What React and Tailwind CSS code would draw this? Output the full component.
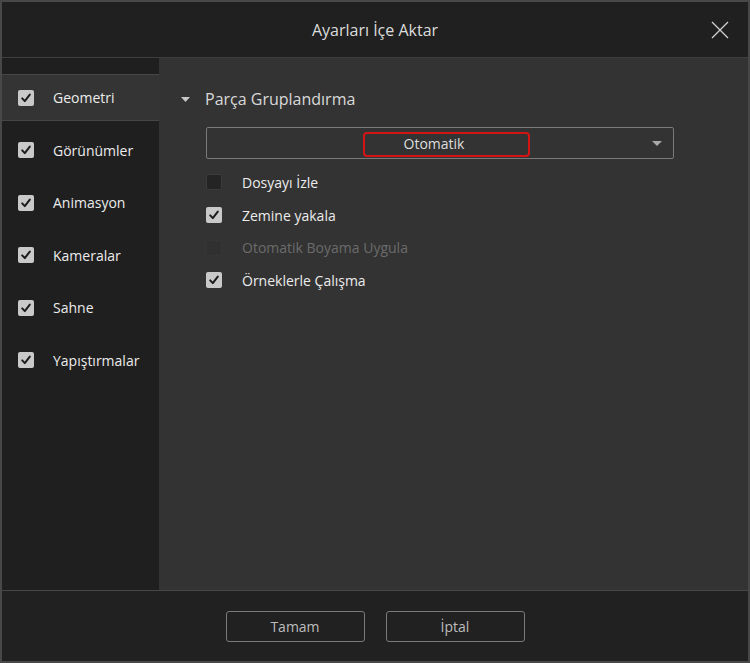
import React from 'react';

const sections = ['Geometri', 'Görünümler', 'Animasyon', 'Kameralar', 'Sahne', 'Yapıştırmalar'];

const options = [
  { label: 'Dosyayı İzle', state: 'off' },
  { label: 'Zemine yakala', state: 'on' },
  { label: 'Otomatik Boyama Uygula', state: 'disabled' },
  { label: 'Örneklerle Çalışma', state: 'on' },
];

const Check = ({ state = 'on' }) => {
  if (state === 'off') {
    return <span className="block w-4 h-4 rounded-[2px] bg-[#242424] border border-[#3c3c3c]" />;
  }
  if (state === 'disabled') {
    return <span className="block w-4 h-4 rounded-[2px] bg-[#303030] border border-[#353535]" />;
  }
  return (
    <span className="flex items-center justify-center w-4 h-4 rounded-[2px] bg-[#c9c9c9]">
      <svg width="12" height="12" viewBox="0 0 12 12" fill="none">
        <path d="M2.2 6.4 L4.8 9.1 L9.8 2.6" stroke="#1c1c1c" strokeWidth="2" strokeLinecap="round" strokeLinejoin="round" />
      </svg>
    </span>
  );
};

const App = () => {
  return (
    <div
      className="w-[750px] h-[663px] flex flex-col bg-[#202020] border-2 border-[#484848] text-[#e6e6e6] overflow-hidden"
      style={{ fontFamily: '"Open Sans", "Noto Sans", sans-serif' }}
    >
      {/* Title bar */}
      <header className="relative h-[56px] shrink-0 flex items-center justify-center bg-[#202020] border-b border-[#3e3e3e]">
        <h1 className="text-[16px] text-[#dcdcdc]">Ayarları İçe Aktar</h1>
        <button type="button" className="absolute right-[18px] top-[18px] w-[20px] h-[20px] flex items-center justify-center">
          <svg width="20" height="20" viewBox="0 0 20 20" fill="none">
            <path d="M2 2 L18 18 M18 2 L2 18" stroke="#cfcfcf" strokeWidth="1.3" />
          </svg>
        </button>
      </header>

      {/* Body */}
      <div className="flex h-[532px] shrink-0">
        {/* Sidebar */}
        <nav className="w-[157px] shrink-0 bg-[#1f1f1f] pt-[16px] flex flex-col gap-[5.5px]">
          {sections.map((s, i) => (
            <div
              key={s}
              className={
                i === 0
                  ? 'h-[47px] flex items-center pl-[16px] bg-[#343434] border-y border-[#464646]'
                  : 'h-[47px] flex items-center pl-[16px]'
              }
            >
              <Check />
              <span className="ml-[19px] text-[14px] text-[#ececec]">{s}</span>
            </div>
          ))}
        </nav>

        {/* Content */}
        <main className="flex-1 bg-[#333333] pl-[22px] pt-[29px]">
          <div className="flex items-center h-[24px]">
            <svg width="9" height="5" viewBox="0 0 9 5">
              <path d="M0 0 L9 0 L4.5 5 Z" fill="#c8c8c8" />
            </svg>
            <span className="ml-[15px] text-[16px] text-[#d9d9d9]">Parça Gruplandırma</span>
          </div>

          <div className="ml-[25px] mt-[16px] w-[468px]">
            <div className="relative h-[32px] flex items-center justify-center pr-[12px] border border-[#7a7a7a] rounded-[2px]">
              <span className="text-[14px] text-[#dedede]">Otomatik</span>
              <svg className="absolute right-[11px] top-[13px]" width="10" height="5" viewBox="0 0 10 5">
                <path d="M0 0 L10 0 L5 5 Z" fill="#a9a9a9" />
              </svg>
              <span className="absolute left-[156px] top-[4px] w-[167px] h-[25px] border-2 border-[#d21414] rounded-[4px]" />
            </div>

            <div className="mt-[7px] flex flex-col">
              {options.map((o) => (
                <div key={o.label} className="h-[32.7px] flex items-center">
                  <Check state={o.state} />
                  <span
                    className={
                      o.state === 'disabled'
                        ? 'ml-[20px] text-[14px] text-[#6b6b6b]'
                        : 'ml-[20px] text-[14px] text-[#ececec]'
                    }
                  >
                    {o.label}
                  </span>
                </div>
              ))}
            </div>
          </div>
        </main>
      </div>

      {/* Footer */}
      <footer className="h-[71px] shrink-0 flex items-start justify-center gap-[21px] pt-[20px] bg-[#212121] border-t border-[#474747]">
        <button type="button" className="w-[139px] h-[31px] rounded-[3px] border border-[#7a7a7a] text-[14px] text-[#bdbdbd]">
          Tamam
        </button>
        <button type="button" className="w-[139px] h-[31px] rounded-[3px] border border-[#7a7a7a] text-[14px] text-[#bdbdbd]">
          İptal
        </button>
      </footer>
    </div>
  );
};

export default App;
